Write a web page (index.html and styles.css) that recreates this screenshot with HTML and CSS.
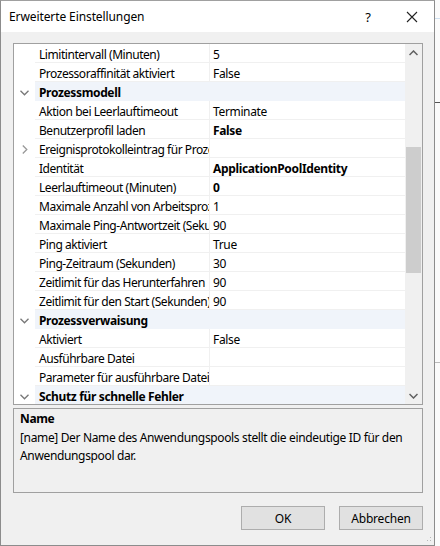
FILE: index.html
```html
<!DOCTYPE html>
<html lang="de">
<head>
<meta charset="utf-8">
<title>Erweiterte Einstellungen</title>
<link rel="stylesheet" href="styles.css">
</head>
<body>
<div class="backdrop">
  <div class="bline l1"></div>
  <div class="bline l2"></div>
  <div class="bline l3"></div>
</div>
<div class="window">
  <div class="titlebar">
    <span class="title">Erweiterte Einstellungen</span>
    <span class="help">?</span>
    <span class="close"><svg width="12" height="12" viewBox="0 0 12 12"><path d="M1 1 L11 11 M11 1 L1 11" stroke="#222" stroke-width="1.1" fill="none"/></svg></span>
  </div>
  <div class="body">
    <div class="grid">
      <div class="rows">
        <div class="row"><span class="gut"></span><span class="name">Limitintervall (Minuten)</span><span class="val">5</span></div>
        <div class="row"><span class="gut"></span><span class="name">Prozessoraffinität aktiviert</span><span class="val">False</span></div>
        <div class="row cat"><span class="gut"><svg class="chev" width="9" height="6" viewBox="0 0 9 6"><path d="M0.5 0.8 L4.5 4.8 L8.5 0.8" stroke="#777" stroke-width="1.3" fill="none"/></svg></span><span class="catname">Prozessmodell</span></div>
        <div class="row"><span class="gut"></span><span class="name">Aktion bei Leerlauftimeout</span><span class="val">Terminate</span></div>
        <div class="row"><span class="gut"></span><span class="name">Benutzerprofil laden</span><span class="val b">False</span></div>
        <div class="row"><span class="gut"><svg class="chev" width="6" height="9" viewBox="0 0 6 9"><path d="M0.8 0.5 L4.8 4.5 L0.8 8.5" stroke="#999" stroke-width="1.3" fill="none"/></svg></span><span class="name">Ereignisprotokolleintrag für Prozessmodell</span><span class="val"></span></div>
        <div class="row"><span class="gut"></span><span class="name">Identität</span><span class="val b">ApplicationPoolIdentity</span></div>
        <div class="row"><span class="gut"></span><span class="name">Leerlauftimeout (Minuten)</span><span class="val b">0</span></div>
        <div class="row"><span class="gut"></span><span class="name">Maximale Anzahl von Arbeitsprozessen</span><span class="val">1</span></div>
        <div class="row"><span class="gut"></span><span class="name">Maximale Ping-Antwortzeit (Sekunden)</span><span class="val">90</span></div>
        <div class="row"><span class="gut"></span><span class="name">Ping aktiviert</span><span class="val">True</span></div>
        <div class="row"><span class="gut"></span><span class="name">Ping-Zeitraum (Sekunden)</span><span class="val">30</span></div>
        <div class="row"><span class="gut"></span><span class="name">Zeitlimit für das Herunterfahren</span><span class="val">90</span></div>
        <div class="row"><span class="gut"></span><span class="name">Zeitlimit für den Start (Sekunden)</span><span class="val">90</span></div>
        <div class="row cat"><span class="gut"><svg class="chev" width="9" height="6" viewBox="0 0 9 6"><path d="M0.5 0.8 L4.5 4.8 L8.5 0.8" stroke="#777" stroke-width="1.3" fill="none"/></svg></span><span class="catname">Prozessverwaisung</span></div>
        <div class="row"><span class="gut"></span><span class="name">Aktiviert</span><span class="val">False</span></div>
        <div class="row"><span class="gut"></span><span class="name">Ausführbare Datei</span><span class="val"></span></div>
        <div class="row"><span class="gut"></span><span class="name">Parameter für ausführbare Datei</span><span class="val"></span></div>
        <div class="row cat"><span class="gut"><svg class="chev" width="9" height="6" viewBox="0 0 9 6"><path d="M0.5 0.8 L4.5 4.8 L8.5 0.8" stroke="#777" stroke-width="1.3" fill="none"/></svg></span><span class="catname">Schutz für schnelle Fehler</span></div>
      </div>
      <div class="scrollbar">
        <div class="arrow"><svg width="9" height="6" viewBox="0 0 9 6"><path d="M0.5 5 L4.5 1 L8.5 5" stroke="#606060" stroke-width="1.5" fill="none"/></svg></div>
        <div class="track"><div class="thumb"></div></div>
        <div class="arrow"><svg width="9" height="6" viewBox="0 0 9 6"><path d="M0.5 1 L4.5 5 L8.5 1" stroke="#606060" stroke-width="1.5" fill="none"/></svg></div>
      </div>
    </div>
    <div class="desc">
      <div class="desc-title">Name</div>
      <div class="desc-text">[name] Der Name des Anwendungspools stellt die eindeutige ID für den Anwendungspool dar.</div>
    </div>
    <div class="buttons">
      <button class="btn">OK</button>
      <button class="btn">Abbrechen</button>
    </div>
    <div class="grip"></div>
  </div>
</div>
</body>
</html>
```
FILE: styles.css
```css
* { box-sizing: border-box; }
html, body { margin: 0; padding: 0; }
body {
  width: 440px;
  height: 546px;
  background: #ffffff;
  font-family: "Noto Sans", "Open Sans", "Liberation Sans", sans-serif;
  font-size: 12px;
  color: #000;
  overflow: hidden;
  position: relative;
}
.backdrop {
  position: absolute;
  left: 435px;
  top: 0;
  width: 5px;
  height: 546px;
  background: #fbfbfb;
}
.bline { position: absolute; left: 0; width: 5px; height: 1px; }
.l1 { top: 18px; background: #cfe0f0; }
.l2 { top: 102px; background: #555; }
.l3 { top: 362px; background: #bbb; }
.window {
  position: relative;
  width: 435px;
  height: 546px;
  border: 1px solid #8c8c8c;
  border-top-color: #a0a0a0;
  background: #f0f0f0;
  display: flex;
  flex-direction: column;
}
.titlebar {
  height: 31px;
  background: #ffffff;
  display: flex;
  align-items: center;
  padding-left: 8px;
  flex: none;
}
.title { flex: 1; font-size: 12px; letter-spacing: -0.1px; }
.help { width: 46px; text-align: center; font-size: 13px; margin-right: -2px; }
.close { width: 46px; display: flex; justify-content: center; align-items: center; margin-right: -1px; }
.body {
  flex: 1;
  padding: 11px 10px 0 12px;
  position: relative;
}
.grid {
  width: 410px;
  height: 362px;
  border: 1px solid #a0a0a0;
  background: #ffffff;
  display: flex;
  overflow: hidden;
}
.rows { width: 391px; overflow: hidden; }
.row {
  height: 19px;
  display: flex;
  align-items: stretch;
  white-space: nowrap;
}
.gut {
  width: 21px;
  flex: none;
  display: flex;
  align-items: center;
  justify-content: center;
  background: #ffffff;
  padding-top: 2px;
}
.name {
  width: 175px;
  flex: none;
  overflow: hidden;
  padding-left: 4px;
  padding-top: 3px;
  line-height: 15px;
  border-bottom: 1px solid #f0f0f0;
  border-right: 1px solid #f0f0f0;
  letter-spacing: -0.45px;
}
.val {
  flex: 1;
  padding-left: 3px;
  padding-top: 3px;
  line-height: 15px;
  border-bottom: 1px solid #f0f0f0;
  letter-spacing: -0.35px;
}
.b { font-weight: bold; }
.cat .catname {
  flex: 1;
  background: #f0f4fa;
  font-weight: bold;
  padding-left: 4px;
  padding-top: 3px;
  line-height: 16px;
  letter-spacing: -0.35px;
}
.cat .gut { background: #ffffff; }
.scrollbar {
  width: 17px;
  flex: none;
  background: #f0f0f0;
  display: flex;
  flex-direction: column;
}
.arrow { height: 17px; display: flex; align-items: center; justify-content: center; flex: none; }
.track { flex: 1; padding: 86px 1px 0 1px; }
.thumb { height: 126px; background: #cdcdcd; }
.desc {
  margin-top: 3px;
  width: 410px;
  height: 85px;
  border: 1px solid #a0a0a0;
  background: #f0f0f0;
  padding: 0 6px;
  line-height: 19px;
}
.desc-title { font-weight: bold; letter-spacing: -0.35px; }
.desc-text { letter-spacing: -0.35px; line-height: 18px; padding-top: 1px; }
.buttons {
  display: flex;
  justify-content: flex-end;
  gap: 14px;
  margin-top: 13px;
  width: 410px;
}
.btn {
  width: 84px;
  height: 24px;
  background: #e1e1e1;
  border: 1px solid #adadad;
  font-family: inherit;
  font-size: 12px;
  color: #000;
  padding: 0;
  letter-spacing: -0.2px;
}
.grip {
  position: absolute;
  right: 1px;
  bottom: 2px;
  width: 10px;
  height: 10px;
  background-image: radial-gradient(circle, #b8b8b8 0.8px, transparent 1px);
  background-size: 3px 3px;
  clip-path: polygon(100% 0, 100% 100%, 0 100%);
}
```
